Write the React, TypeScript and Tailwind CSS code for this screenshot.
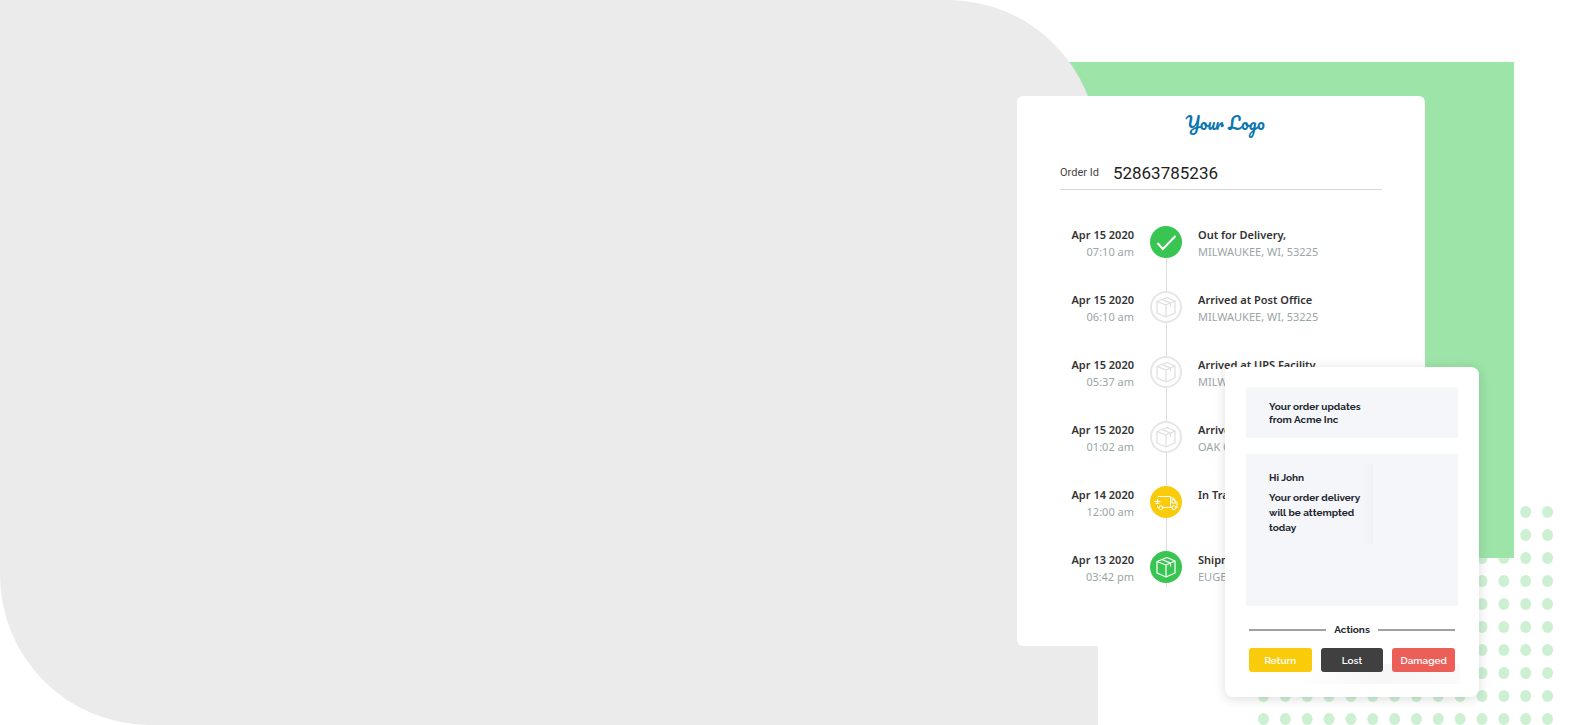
import React from "react";

type Status = "done" | "pending" | "transit" | "shipped";

interface TrackingEvent {
  date: string;
  time: string;
  title: string;
  place: string;
  status: Status;
}

const events: TrackingEvent[] = [
  { date: "Apr 15 2020", time: "07:10 am", title: "Out for Delivery,", place: "MILWAUKEE, WI, 53225", status: "done" },
  { date: "Apr 15 2020", time: "06:10 am", title: "Arrived at Post Office", place: "MILWAUKEE, WI, 53225", status: "pending" },
  { date: "Apr 15 2020", time: "05:37 am", title: "Arrived at UPS Facility", place: "MILWAUKEE, WI, 53225", status: "pending" },
  { date: "Apr 15 2020", time: "01:02 am", title: "Arrived", place: "OAK CREEK", status: "pending" },
  { date: "Apr 14 2020", time: "12:00 am", title: "In Transit", place: "", status: "transit" },
  { date: "Apr 13 2020", time: "03:42 pm", title: "Shipment", place: "EUGENE", status: "shipped" },
];

const badgeStyles: Record<Status, string> = {
  done: "bg-[#38c552] text-white",
  pending: "border-2 border-[#e6e6e6] bg-white text-[#dedede]",
  transit: "bg-[#f9cb0b] text-white",
  shipped: "bg-[#38c552] text-white",
};

const CheckIcon = () => (
  <svg viewBox="0 0 32 32" className="size-8" fill="none" stroke="currentColor" strokeWidth="2">
    <path d="M7.5 17l5.3 6L25.5 10" />
  </svg>
);

const BoxIcon = () => (
  <svg viewBox="0 0 32 32" className="size-8 shrink-0" fill="none" stroke="currentColor" strokeWidth="1.2" strokeLinejoin="round">
    <path d="M7 10.5L17 6.5l8 3.5v12L16 26l-9-4z" />
    <path d="M7 10.5l9 3.5 9-4M16 14v12M12 8.5l8.5 3.6v3.4" />
  </svg>
);

const TruckIcon = () => (
  <svg viewBox="0 0 32 32" className="size-8" fill="none" stroke="currentColor" strokeWidth="1" strokeLinejoin="round" strokeLinecap="round">
    <path d="M8 10.5h12.5v11h-7.5M9 21.5H7.500v-2M20.5 12h3l3.500 5v4.500h-1M22 21.5h-1.500" />
    <path d="M22.5 13.5h1.500l2 3.500h-3.500zM4.500 15.500h5.500M6 17.500h3M7.500 13.500v4" />
    <circle cx="11" cy="21.7" r="2" />
    <circle cx="24" cy="21.7" r="2" />
  </svg>
);

const StatusBadge = ({ status }: { status: Status }) => (
  <div className={`relative flex size-8 items-center justify-center rounded-full ${badgeStyles[status]}`}>
    {status === "done" && <CheckIcon />}
    {(status === "pending" || status === "shipped") && <BoxIcon />}
    {status === "transit" && <TruckIcon />}
  </div>
);

const DotGrid = () => {
  const dots = [];
  for (let row = 0; row < 10; row++) {
    for (let col = 0; col < 14; col++) {
      dots.push(<ellipse key={`${row}-${col}`} cx={6.5 + col * 21.85} cy={6 + row * 23} rx="5.5" ry="6" />);
    }
  }
  return (
    <svg viewBox="0 0 296 219" className="absolute top-[506px] right-[23px] h-[219px] w-[296px]" fill="#cdf0d3" aria-hidden="true">
      {dots}
    </svg>
  );
};

const TrackingCard = () => (
  <article className="h-[550px] w-[408px] rounded-md bg-white px-[43px] pt-4">
    <h1 className="pl-2 text-center font-['Pacifico',cursive] text-[17px] leading-[22px] text-[#0b76b0]">
      Your Logo
    </h1>
    <div className="mt-[22px] flex h-[34px] items-center gap-3.5 border-b border-[#d8d8d8] pt-0.5 font-['Roboto',sans-serif]">
      <label htmlFor="order-id" className="text-[11px] text-[#444]">
        Order Id
      </label>
      <input
        id="order-id"
        defaultValue="52863785236"
        className="min-w-0 flex-1 bg-transparent text-[17px] text-[#222] outline-none"
      />
    </div>
    <div className="relative mt-9">
      <div className="absolute top-0 bottom-0 left-[106px] w-px bg-[#dcdcdc]" />
      <ol className="font-['Noto_Sans','Open_Sans',sans-serif] text-[11px] leading-[17px]">
        {events.map((event, index) => (
          <li key={index} className="grid h-[65px] grid-cols-[74px_32px_1fr] gap-4 last:h-9">
            <div className="text-right">
              <div className="font-semibold text-[#333]">{event.date}</div>
              <div className="text-[#9aa5a6]">{event.time}</div>
            </div>
            <StatusBadge status={event.status} />
            <div className="whitespace-nowrap">
              <div className="font-semibold text-[#333]">{event.title}</div>
              <div className="text-[#9aa5a6]">{event.place}</div>
            </div>
          </li>
        ))}
      </ol>
    </div>
  </article>
);

const MessageCard = () => (
  <article className="absolute top-[271px] left-[208px] h-[330px] w-[254px] rounded-lg bg-white px-[21px] pt-5 font-['Raleway','Lato',sans-serif] text-[10px] font-bold text-[#23262f] shadow-[0_2px_12px_rgba(0,0,0,0.14)]">
    <div className="h-[51px] rounded-[3px] bg-[#f4f6fa] px-[23px] pt-[13px] leading-[13px]">
      <p>
        Your order updates
        <br />
        from Acme Inc
      </p>
    </div>
    <div className="relative mt-4 h-[152px] rounded-[3px] bg-[#f4f6fa] px-[23px] pt-4">
      <div className="absolute top-2.5 left-[116px] h-20 w-[11px] bg-linear-to-r from-transparent to-[#f0f1f5]" />
      <p className="leading-[15px]">Hi John</p>
      <p className="mt-[5px] leading-[15px]">
        Your order delivery
        <br />
        will be attempted
        <br />
        today
      </p>
    </div>
    <div className="mt-4 flex items-center gap-2 px-[3px] leading-4">
      <span className="h-0.5 flex-1 bg-[#a0a0a0]" />
      <h2>Actions</h2>
      <span className="h-0.5 flex-1 bg-[#a0a0a0]" />
    </div>
    <div className="relative mt-2.5 flex gap-[9px] px-[3px] font-semibold text-white">
      <div className="absolute top-4 -right-0.5 left-12 h-5 bg-linear-to-r from-transparent via-[#f7f7f7] to-[#fafafa]" />
      <button type="button" className="relative h-6 flex-1 rounded-[3px] bg-[#f9cb0b]">Return</button>
      <button type="button" className="relative h-6 flex-1 rounded-[3px] bg-[#404040]">Lost</button>
      <button type="button" className="relative h-6 flex-1 rounded-[3px] bg-[#ec5f58]">Damaged</button>
    </div>
  </article>
);

const App = () => {
  return (
    <main className="relative min-h-screen overflow-hidden bg-white">
      <DotGrid />
      <div className="absolute top-[62px] right-[62px] h-[496px] w-[480px] bg-[#9ce4a8]" />
      <div className="absolute inset-y-0 right-[478px] left-0 rounded-tr-[150px] rounded-bl-[150px] bg-[#ebebeb]" />
      <div className="flex justify-end pt-24 pr-[151px]">
        <div className="relative">
          <TrackingCard />
          <MessageCard />
        </div>
      </div>
    </main>
  );
};

export default App;
